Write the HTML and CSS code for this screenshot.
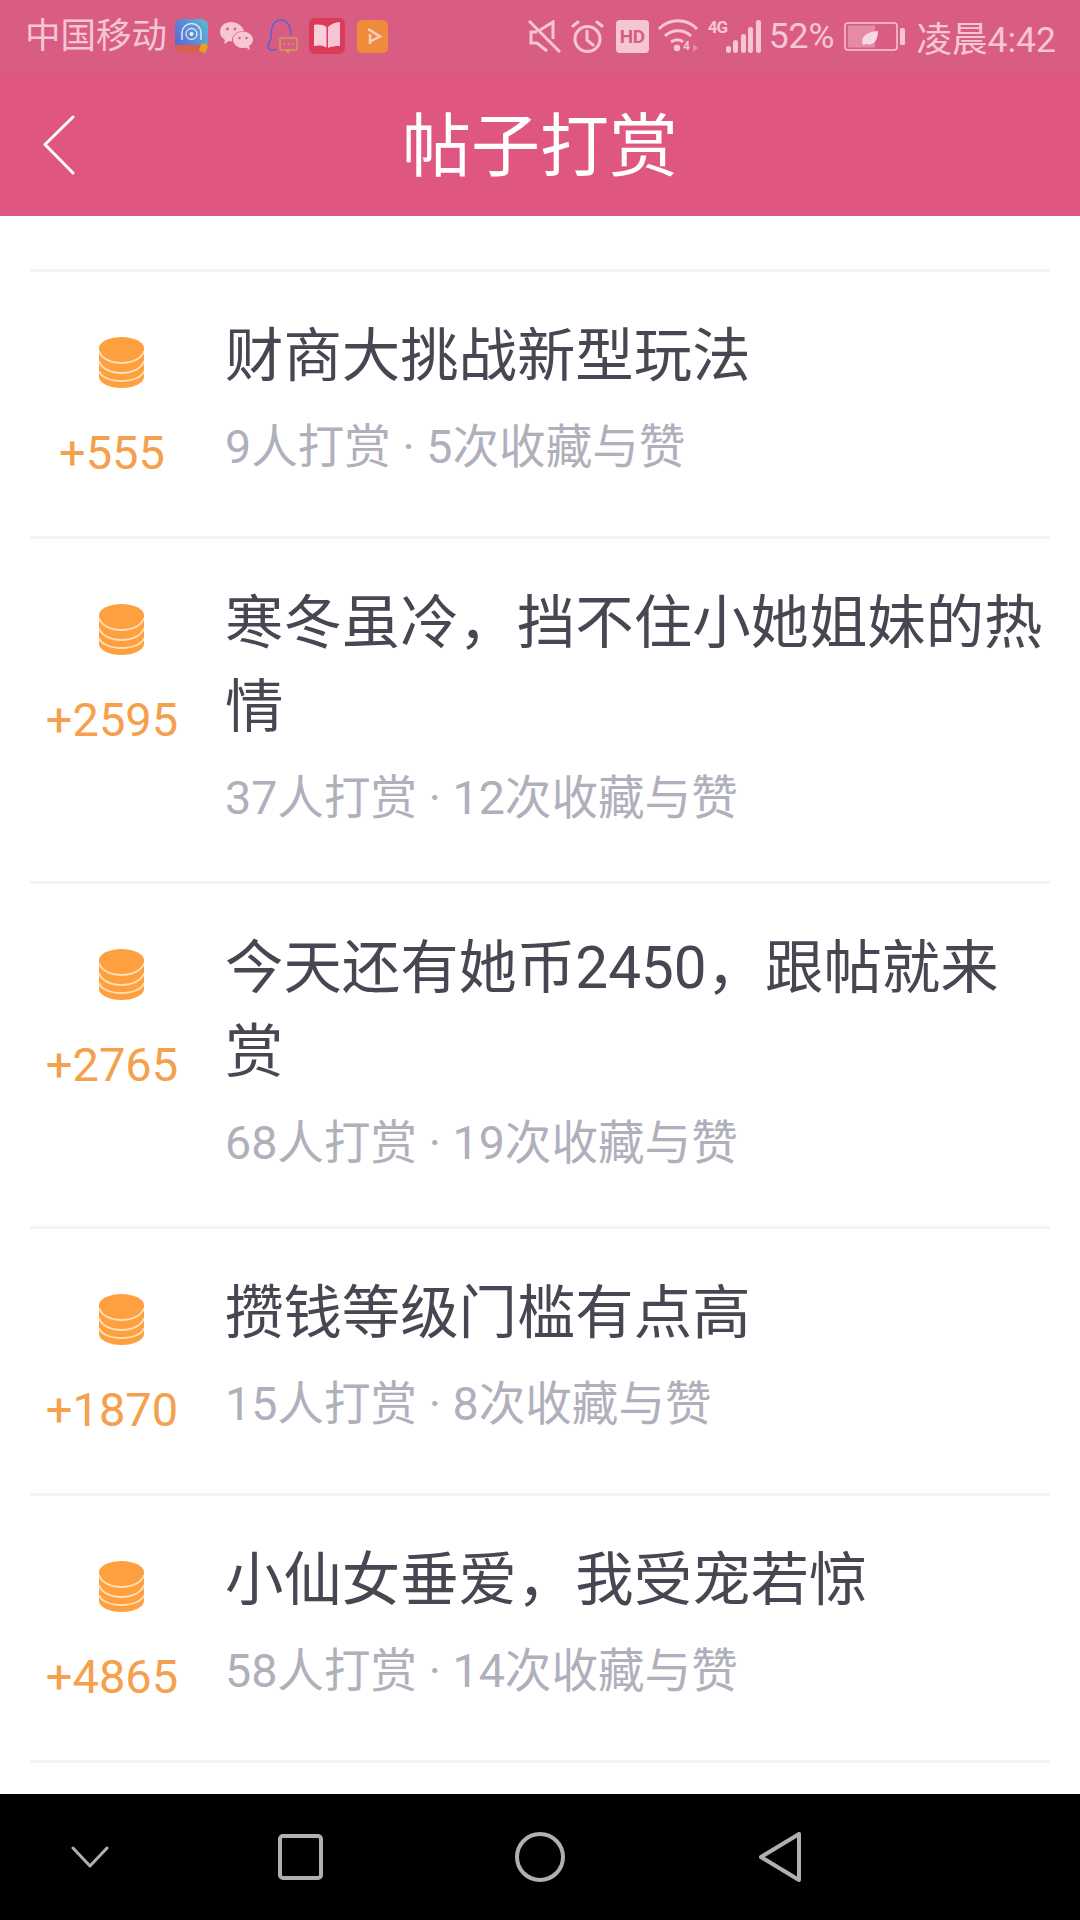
FILE: index.html
```html
<!DOCTYPE html>
<html lang="zh-CN">
<head>
  <meta charset="UTF-8">
  <meta name="viewport" content="width=device-width, initial-scale=1.0">
  <title>帖子打赏</title>
  <link rel="stylesheet" href="styles.css">
</head>
<body>
  <svg class="sprites" width="0" height="0">
    <symbol id="coins" viewBox="0 0 45 51">
      <path fill="#ffa040" d="M0 11C0 5 10 0 22.500 0S45 5 45 11v29c0 6-10 11-22.500 11S0 46 0 40z"/>
      <path fill="none" stroke="#ffe0b8" stroke-width="1.800" d="M0 14c2 7 11 12 22.500 12S43 21 45 14M0 24c2 7 11 12 22.500 12S43 31 45 24M0 34c2 6 11 10 22.500 10S43 40 45 34"/>
    </symbol>
  </svg>

  <div class="status-bar">
    <span class="carrier">中国移动</span>
    <div class="notify-icons">
      <svg class="ic-app" width="33" height="34" viewBox="0 0 33 34">
        <defs><linearGradient id="appBg" x1="0" y1="0.6" x2="1" y2="0"><stop offset="0" stop-color="#5b6cd6"/><stop offset="1" stop-color="#58bcd4"/></linearGradient></defs>
        <rect width="33" height="34" rx="7" fill="url(#appBg)"/>
        <path d="M0 26h33v1a7 7 0 0 1-7 7H7a7 7 0 0 1-7-7z" fill="#d8604c"/>
        <path d="M7 21v-7a9.500 9.500 0 0 1 19 0v7" fill="none" stroke="#dfe3f4" stroke-width="1.500"/>
        <circle cx="16.500" cy="15" r="5.500" fill="none" stroke="#dfe3f4" stroke-width="1.300"/>
        <circle cx="16.500" cy="15" r="2" fill="#f0f0f8"/>
        <path d="M24 32l2-7 5-1 2 4-3 6z" fill="#e8a028"/>
      </svg>
      <svg class="ic-wechat" width="33" height="28" viewBox="0 0 33 28" fill="#f6c6d4">
        <path d="M11 0C5 0 0 4 0 10c0 3 2 6 5 8l-1 4 5-3c1 .3 2 .5 3 .5-.5-5.500 4-10.500 12-10.500C23 4 17 0 11 0z"/>
        <path d="M23 9.500c-5.500 0-10 3.700-10 8.200s4.500 8.300 10 8.300c1 0 2 0 3-.5l4 2.500-1-4c2.500-1.500 4-3.700 4-6.300 0-4.500-4.500-8.200-10-8.200z"/>
        <g fill="#d95d83"><circle cx="7.500" cy="7" r="1.400"/><circle cx="15" cy="7" r="1.400"/><circle cx="19.500" cy="16" r="1.200"/><circle cx="26.500" cy="16" r="1.200"/></g>
      </svg>
      <svg class="ic-qq" width="31" height="35" viewBox="0 0 31 35">
        <path fill="none" stroke="#5b62d0" stroke-width="1.500" d="M10 30c-6 2-9 1-9-3 0-3 3-5 3-8 0-3 0-7 1-10 1-5 5-8 9-8s8 3 9 8c.5 2 1 4 1 7"/>
        <rect x="13" y="19" width="17" height="12" rx="1" fill="#d95d83" stroke="#cfa050" stroke-width="1.500"/>
        <path d="M18 31h6l-3 3.500z" fill="#cfa050"/>
        <g fill="#cfa050"><circle cx="17" cy="25" r="1"/><circle cx="21.500" cy="25" r="1"/><circle cx="26" cy="25" r="1"/></g>
      </svg>
      <svg class="ic-book" width="36" height="36" viewBox="0 0 36 36">
        <rect width="36" height="36" rx="6" fill="#dc3a58"/>
        <path d="M17.500 9C14 6.500 9 6 5 7v21c4-1 9-1 12.500 1.500z" fill="#f8d0dc"/>
        <path d="M19 9c3-3 7-4.500 12-5v24c-5 0-9 .5-12 2z" fill="#f6c4d4"/>
      </svg>
      <svg class="ic-video" width="31" height="33" viewBox="0 0 31 33">
        <rect width="31" height="33" rx="5" fill="#ee8c3c"/>
        <path d="M11 9l12 7.500L14 21M13 14v10" fill="none" stroke="#f8d0c0" stroke-width="2.500"/>
      </svg>
    </div>
    <div class="system-icons">
      <svg class="ic-mute" width="33" height="33" viewBox="0 0 33 33" fill="none" stroke="#f6c6d4" stroke-width="3">
        <path d="M1 1l31 31"/>
        <path d="M9 12H3v11h6l10 8M12 10l13-8v17"/>
      </svg>
      <svg class="ic-alarm" width="33" height="33" viewBox="0 0 33 33" fill="none" stroke="#f6c6d4" stroke-width="3">
        <circle cx="16.500" cy="19" r="12.500"/>
        <path d="M16 11v9l6 5M2 6l5-4M31 6l-5-4" stroke-linecap="round"/>
      </svg>
      <div class="ic-hd">HD</div>
      <svg class="ic-wifi" width="41" height="34" viewBox="0 0 41 34" fill="none" stroke="#f6c6d4" stroke-width="3">
        <path d="M1 10c10-11 28-11 38 0M7 17c7-7 19-7 26 0M13 23c4-3 9-3 12 0"/>
        <circle cx="19" cy="29" r="3.200" fill="#f6c6d4" stroke="none"/>
        <text class="wifi-num" x="25" y="31">4</text>
        <path d="M35 25l5 4-5 4z" fill="#e88ca6" stroke="none"/>
      </svg>
      <div class="signal">
        <span class="net">4G</span>
        <span class="bar bar-1"></span><span class="bar bar-2"></span><span class="bar bar-3"></span><span class="bar bar-4"></span><span class="bar bar-5"></span>
      </div>
      <span class="percent">52%</span>
      <svg class="ic-battery" width="61" height="29" viewBox="0 0 61 29">
        <rect x="1" y="1" width="52" height="27" rx="3" fill="none" stroke="#f6c6d4" stroke-width="1.500"/>
        <rect x="4" y="3.500" width="27" height="22" fill="#e68ba6"/>
        <rect x="56" y="6" width="5" height="17" rx="1.500" fill="#f6c6d4"/>
        <path d="M19 23c-3-8 3-13 15-14 0 10-5 15-12 13z" fill="#f8d8e2"/>
      </svg>
      <span class="clock">凌晨4:42</span>
    </div>
  </div>

  <header class="nav-header">
    <svg class="back" width="32" height="60" viewBox="0 0 32 60" fill="none" stroke="#fff" stroke-width="3" stroke-linecap="round" stroke-linejoin="round">
      <path d="M30 2L2 29.500 30 58"/>
    </svg>
    <h1>帖子打赏</h1>
  </header>

  <ul class="post-list">
    <li class="post">
      <div class="reward">
        <svg class="coins" width="45" height="51"><use href="#coins"/></svg>
        <span class="amount">+555</span>
      </div>
      <div class="post-body">
        <div class="post-title">财商大挑战新型玩法</div>
        <div class="post-meta">9人打赏 · 5次收藏与赞</div>
      </div>
    </li>
    <li class="post">
      <div class="reward">
        <svg class="coins" width="45" height="51"><use href="#coins"/></svg>
        <span class="amount">+2595</span>
      </div>
      <div class="post-body">
        <div class="post-title">寒冬虽冷，挡不住小她姐妹的热情</div>
        <div class="post-meta">37人打赏 · 12次收藏与赞</div>
      </div>
    </li>
    <li class="post">
      <div class="reward">
        <svg class="coins" width="45" height="51"><use href="#coins"/></svg>
        <span class="amount">+2765</span>
      </div>
      <div class="post-body">
        <div class="post-title">今天还有她币2450，跟帖就来赏</div>
        <div class="post-meta">68人打赏 · 19次收藏与赞</div>
      </div>
    </li>
    <li class="post">
      <div class="reward">
        <svg class="coins" width="45" height="51"><use href="#coins"/></svg>
        <span class="amount">+1870</span>
      </div>
      <div class="post-body">
        <div class="post-title">攒钱等级门槛有点高</div>
        <div class="post-meta">15人打赏 · 8次收藏与赞</div>
      </div>
    </li>
    <li class="post">
      <div class="reward">
        <svg class="coins" width="45" height="51"><use href="#coins"/></svg>
        <span class="amount">+4865</span>
      </div>
      <div class="post-body">
        <div class="post-title">小仙女垂爱，我受宠若惊</div>
        <div class="post-meta">58人打赏 · 14次收藏与赞</div>
      </div>
    </li>
  </ul>

  <nav class="android-nav">
    <svg width="38" height="22" viewBox="0 0 38 22" fill="none" stroke="#b0b0b0" stroke-width="3" stroke-linecap="round" stroke-linejoin="round"><path d="M2 2l17 18L36 2"/></svg>
    <svg width="45" height="46" viewBox="0 0 45 46" fill="none" stroke="#b0b0b0" stroke-width="4"><rect x="2" y="2" width="41" height="42" rx="3"/></svg>
    <svg width="50" height="50" viewBox="0 0 50 50" fill="none" stroke="#b0b0b0" stroke-width="4"><circle cx="25" cy="25" r="23"/></svg>
    <svg width="42" height="50" viewBox="0 0 42 50" fill="none" stroke="#b0b0b0" stroke-width="4" stroke-linejoin="round"><path d="M40 2v46L2 25z"/></svg>
  </nav>
</body>
</html>
```

FILE: styles.css
```css
* {
  margin: 0;
  padding: 0;
  box-sizing: border-box;
}

html, body {
  width: 1080px;
  height: 1920px;
  overflow: hidden;
}

body {
  font-family: Roboto, "Noto Sans CJK SC", sans-serif;
  background: #fff;
  display: flex;
  flex-direction: column;
}

.sprites {
  position: absolute;
}

.status-bar {
  height: 72px;
  flex-shrink: 0;
  background: #d95d83;
  color: #f6c6d4;
  display: flex;
  align-items: center;
  padding: 0 24px 0 25px;
  font-size: 35.500px;
}

.carrier {
  line-height: 40px;
}

.notify-icons {
  display: flex;
  align-items: center;
  margin-left: 8px;
}

.notify-icons svg {
  display: block;
}

.ic-wechat { margin-left: 12px; }
.ic-qq { margin-left: 14px; }
.ic-book { margin-left: 11px; }
.ic-video { margin-left: 12px; }

.system-icons {
  margin-left: auto;
  display: flex;
  align-items: center;
}

.ic-alarm { margin-left: 10px; }
.ic-wifi { margin-left: 9px; }
.ic-battery { margin-left: 9px; }

.wifi-num {
  font-size: 12px;
  font-weight: 700;
  fill: #f6c6d4;
  stroke: none;
}

.ic-hd {
  width: 33px;
  height: 33px;
  margin-left: 12px;
  background: #f6c6d4;
  border-radius: 4px;
  color: #d95d83;
  font-size: 19px;
  font-weight: 700;
  letter-spacing: -0.5px;
  line-height: 33px;
  text-align: center;
}

.signal {
  width: 53px;
  height: 33px;
  margin-left: 9px;
  display: flex;
  align-items: flex-end;
  gap: 2.500px;
  justify-content: flex-end;
  position: relative;
}

.net {
  position: absolute;
  left: 0;
  top: 0;
  font-size: 17px;
  font-weight: 700;
  letter-spacing: -1px;
  line-height: 14px;
}

.bar {
  width: 5px;
  background: #f6c6d4;
  border-radius: 2.500px;
}

.bar-1 { height: 7px; }
.bar-2 { height: 13px; }
.bar-3 { height: 19px; }
.bar-4 { height: 26px; }
.bar-5 { height: 33px; }

.percent {
  margin-left: 8px;
}

.clock {
  margin-left: 12px;
}

.nav-header {
  height: 144px;
  flex-shrink: 0;
  background: #df5780;
  padding-top: 7px;
  display: flex;
  align-items: center;
  justify-content: center;
  position: relative;
}

.nav-header h1 {
  color: #fff;
  font-size: 69px;
  font-weight: 400;
  line-height: 80px;
}

.back {
  position: absolute;
  left: 43px;
  top: 43px;
}

.post-list {
  list-style: none;
  flex: 1;
  margin: 53px 30px 0;
  overflow: hidden;
}

.post {
  display: flex;
  border-top: 3px solid #f4f4f4;
  padding-top: 65px;
  min-height: 267px;
  padding-bottom: 55px;
}

.post:last-child {
  min-height: 270px;
  border-bottom: 3px solid #f4f4f4;
}

.reward {
  width: 164px;
  flex-shrink: 0;
  display: flex;
  flex-direction: column;
  align-items: center;
}

.coins {
  display: block;
  margin-left: 19px;
}

.amount {
  margin-top: 37px;
  color: #f4a04c;
  font-size: 47px;
  line-height: 56px;
}

.post-body {
  margin: -23px 0 0 31px;
  flex: 1;
  min-width: 0;
}

.post-title {
  color: #474753;
  font-size: 58.400px;
  line-height: 84px;
}

.post-meta {
  margin-top: 21px;
  color: #b0b0bc;
  font-size: 46.600px;
  line-height: 56px;
}

.android-nav {
  height: 126px;
  flex-shrink: 0;
  background: #000;
  display: grid;
  grid-template-columns: 180px 240px 240px 240px 180px;
  justify-items: center;
  align-items: center;
}
```
